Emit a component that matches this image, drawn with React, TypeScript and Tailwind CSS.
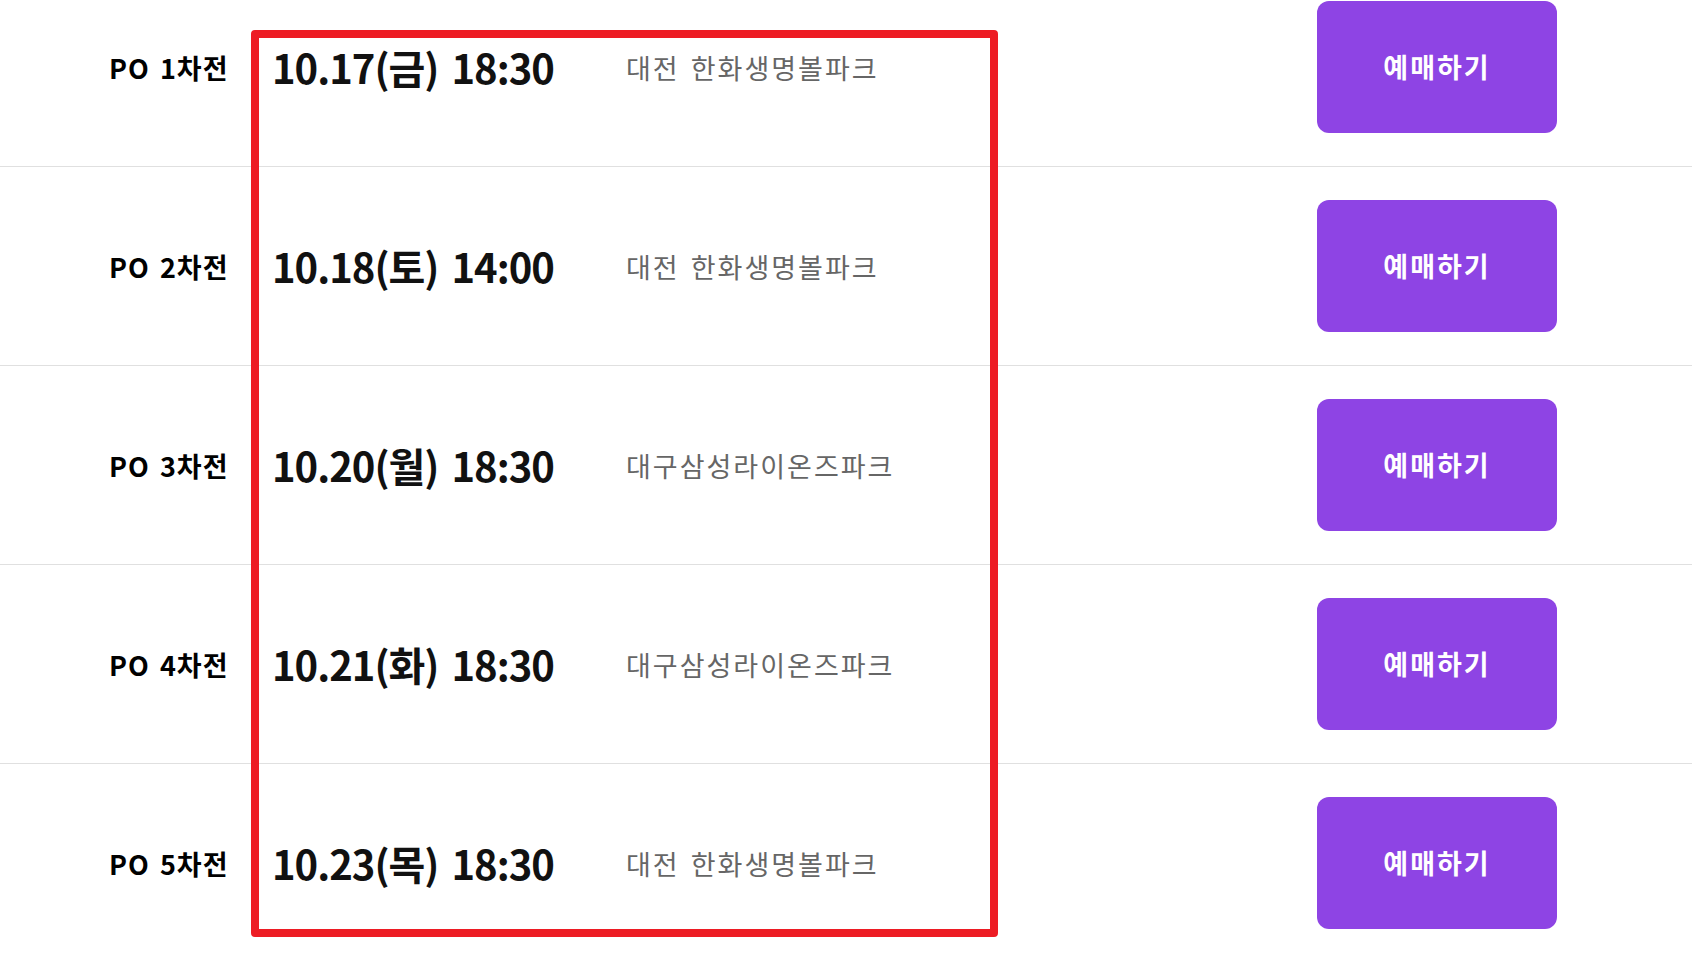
import React from 'react';

const games = [
  { label: 'PO 1차전', date: '10.17(금) 18:30', venue: '대전 한화생명볼파크' },
  { label: 'PO 2차전', date: '10.18(토) 14:00', venue: '대전 한화생명볼파크' },
  { label: 'PO 3차전', date: '10.20(월) 18:30', venue: '대구삼성라이온즈파크' },
  { label: 'PO 4차전', date: '10.21(화) 18:30', venue: '대구삼성라이온즈파크' },
  { label: 'PO 5차전', date: '10.23(목) 18:30', venue: '대전 한화생명볼파크' },
];

const App: React.FC = () => {
  return (
    <div
      className="relative w-full h-[954px] overflow-hidden bg-white"
      style={{ fontFamily: '"Noto Sans CJK KR", "Noto Sans", sans-serif' }}
    >
      <div className="mt-[-32px]">
        {games.map((game, index) => (
          <div
            key={index}
            className="flex items-center h-[199px] box-border border-b border-[#e0e0e0]"
          >
            <div className="w-[272px] pl-[109px] text-[27px] font-bold text-black leading-none tracking-[1px] [word-spacing:3px]">
              {game.label}
            </div>
            <div className="w-[354px] text-[40px] font-bold text-[#111] leading-none tracking-[-1px] [word-spacing:5px]">
              {game.date}
            </div>
            <div className="flex-1 text-[27px] text-[#666] leading-none tracking-[2px] [word-spacing:3px]">
              {game.venue}
            </div>
            <button className="w-[240px] h-[132px] mr-[135px] rounded-[12px] bg-[#8e44e4] text-white text-[27px] font-bold tracking-[2px]">
              예매하기
            </button>
          </div>
        ))}
      </div>

      {/* highlight box */}
      <div className="absolute left-[251px] top-[30px] w-[747px] h-[907px] border-[8px] border-[#ed1c24] rounded-[4px] pointer-events-none" />
    </div>
  );
};

export default App;
